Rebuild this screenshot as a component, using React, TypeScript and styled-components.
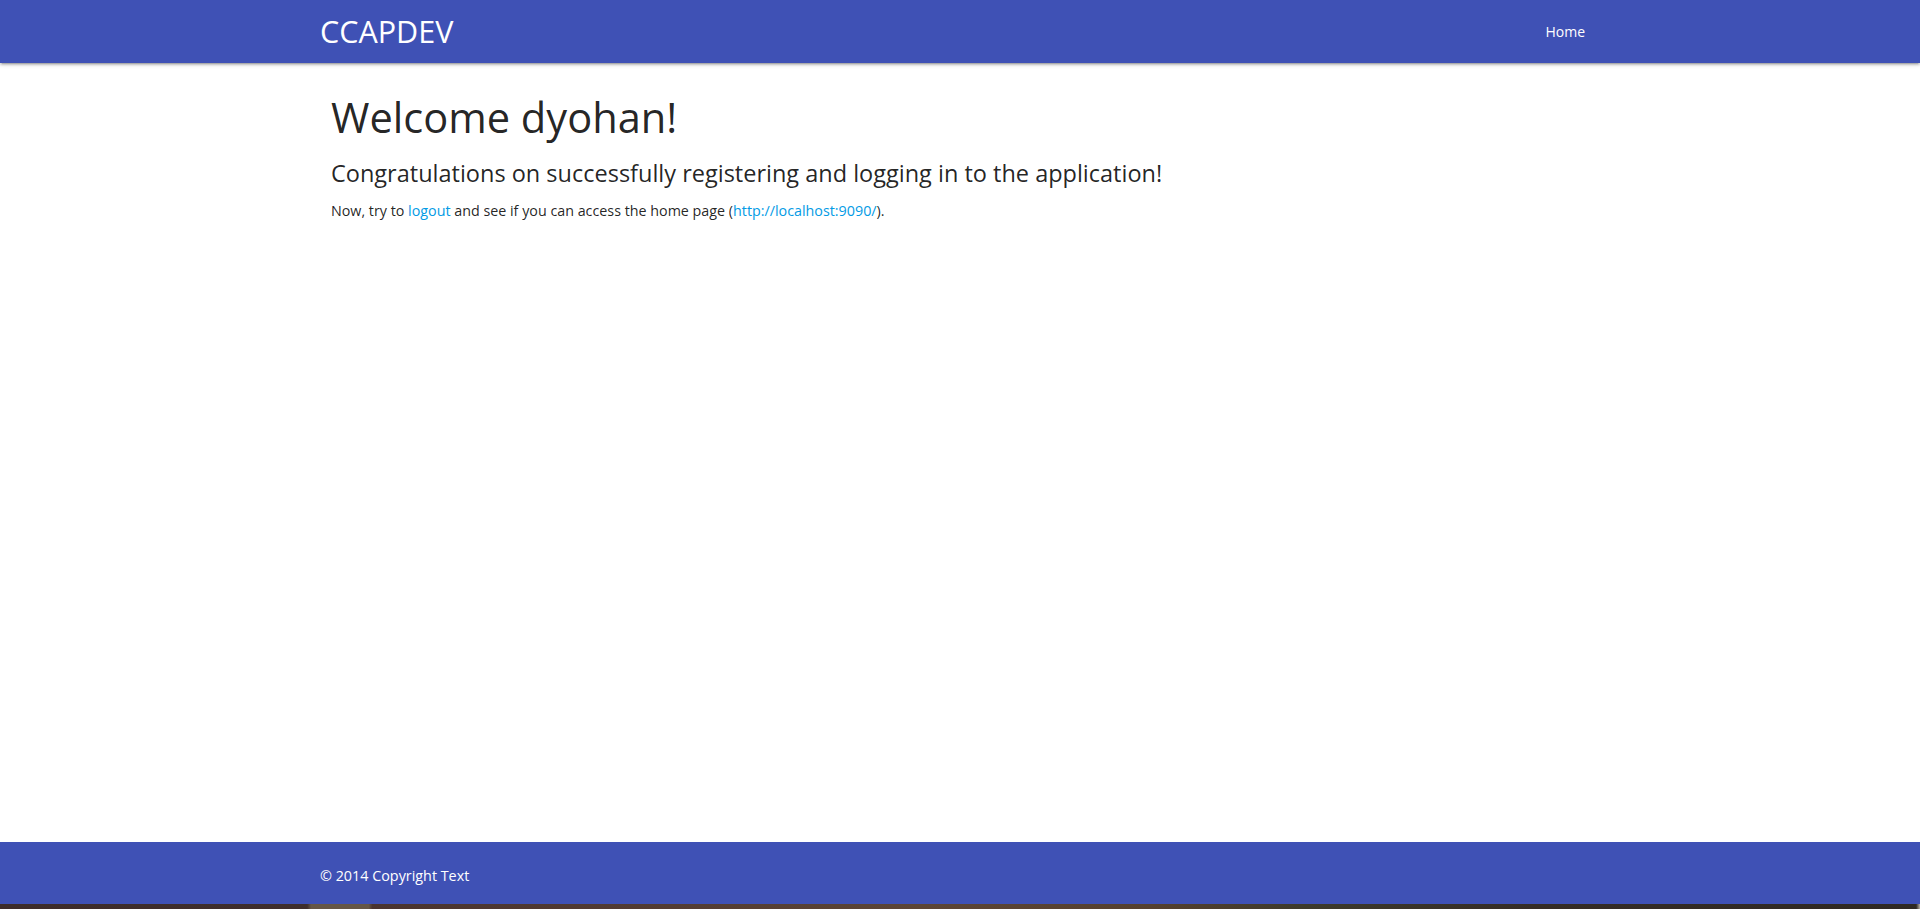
import styled, { createGlobalStyle } from 'styled-components'

const GlobalStyle = createGlobalStyle`
  html, body {
    margin: 0;
    padding: 0;
    background: #ffffff;
    font-family: 'Open Sans', 'Noto Sans', sans-serif;
    color: rgba(0, 0, 0, 0.87);
  }
  * {
    box-sizing: border-box;
  }
`

const Page = styled.div`
  min-height: 100vh;
  display: flex;
  flex-direction: column;
`

const NavBar = styled.nav`
  height: 63px;
  background-color: #3f51b5;
  color: #ffffff;
  box-shadow: 0 2px 2px 0 rgba(0, 0, 0, 0.14), 0 3px 1px -2px rgba(0, 0, 0, 0.12),
    0 1px 5px 0 rgba(0, 0, 0, 0.2);
  position: relative;
  z-index: 2;
`

const Container = styled.div`
  width: 1280px;
  margin: 0 auto;
`

const NavInner = styled(Container)`
  height: 100%;
  display: flex;
  align-items: center;
  justify-content: space-between;
`

const Brand = styled.a`
  font-size: 30.5px;
  line-height: 63px;
  color: #ffffff;
  text-decoration: none;
`

const NavLinks = styled.ul`
  list-style: none;
  margin: 0;
  padding: 0;
  display: flex;
`

const NavLink = styled.a`
  display: block;
  padding: 0 15px;
  font-size: 14px;
  line-height: 63px;
  color: #ffffff;
  text-decoration: none;
`

const Main = styled.main`
  flex: 1;
`

const Content = styled(Container)`
  padding: 32px 11px 0;
`

const Title = styled.h1`
  margin: 0;
  font-size: 41.6px;
  font-weight: 400;
  line-height: 1.1;
`

const Subtitle = styled.h2`
  margin: 18px 0 0;
  font-size: 23.5px;
  font-weight: 400;
  line-height: 1.2;
`

const Text = styled.p`
  margin: 13px 0 0;
  font-size: 14.3px;
  line-height: 1.5;
`

const Link = styled.a`
  color: #039be5;
  text-decoration: none;
`

const Footer = styled.footer`
  height: 62px;
  padding-top: 6px;
  background-color: #3f51b5;
  color: #ffffff;
`

const Copyright = styled(Container)`
  font-size: 14.35px;
  line-height: 56px;
`

const DesktopStrip = styled.div`
  height: 5px;
  background: linear-gradient(
    90deg,
    #3d2c2b 0%,
    #3f2e2c 16%,
    #655646 16.2%,
    #655646 19.2%,
    #4a3430 19.4%,
    #533c33 35%,
    #5c4536 48%,
    #55402f 60%,
    #3d3a2c 68%,
    #352c26 80%,
    #2f2923 99.8%,
    #b8b0a4 100%
  );
`

const App = () => {
  return (
    <>
      <GlobalStyle />
      <Page>
        <NavBar>
          <NavInner>
            <Brand href="#">CCAPDEV</Brand>
            <NavLinks>
              <li>
                <NavLink href="#">Home</NavLink>
              </li>
            </NavLinks>
          </NavInner>
        </NavBar>
        <Main>
          <Content>
            <Title>Welcome dyohan!</Title>
            <Subtitle>Congratulations on successfully registering and logging in to the application!</Subtitle>
            <Text>
              Now, try to <Link href="#">logout</Link> and see if you can access the home page (
              <Link href="#">http://localhost:9090/</Link>).
            </Text>
          </Content>
        </Main>
        <Footer>
          <Copyright>© 2014 Copyright Text</Copyright>
        </Footer>
        <DesktopStrip />
      </Page>
    </>
  )
}

export default App
